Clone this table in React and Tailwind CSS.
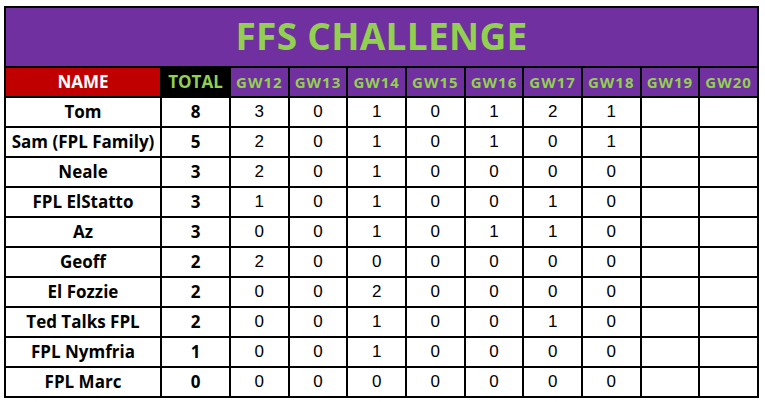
const rows = [
  ["Tom", 8, [3, 0, 1, 0, 1, 2, 1]],
  ["Sam (FPL Family)", 5, [2, 0, 1, 0, 1, 0, 1]],
  ["Neale", 3, [2, 0, 1, 0, 0, 0, 0]],
  ["FPL ElStatto", 3, [1, 0, 1, 0, 0, 1, 0]],
  ["Az", 3, [0, 0, 1, 0, 1, 1, 0]],
  ["Geoff", 2, [2, 0, 0, 0, 0, 0, 0]],
  ["El Fozzie", 2, [0, 0, 2, 0, 0, 0, 0]],
  ["Ted Talks FPL", 2, [0, 0, 1, 0, 0, 1, 0]],
  ["FPL Nymfria", 1, [0, 0, 1, 0, 0, 0, 0]],
  ["FPL Marc", 0, [0, 0, 0, 0, 0, 0, 0]],
]

const weeks = ["GW12", "GW13", "GW14", "GW15", "GW16", "GW17", "GW18", "GW19", "GW20"]

const App = () => {
  return (
    <div className="w-[765px] h-[402px] bg-white pt-[6px] pl-[4px]">
      <table className="w-[755px] border-collapse border-2 border-black font-['Open_Sans',sans-serif] table-fixed">
        <colgroup>
          <col className="w-[156px]" />
          <col className="w-[69px]" />
          {weeks.map((w) => (
            <col key={w} />
          ))}
        </colgroup>
        <thead>
          <tr>
            <th
              colSpan={11}
              className="h-[60px] pb-[4px] bg-[#7030a0] text-[#92d050] text-[37px] font-bold leading-none tracking-[0.3px] border-2 border-black"
            >
              FFS CHALLENGE
            </th>
          </tr>
          <tr className="h-[30px]">
            <th className="bg-[#c00000] text-white text-[17px] font-bold border-2 border-black">NAME</th>
            <th className="bg-black text-[#92d050] text-[17px] font-bold border-2 border-black">TOTAL</th>
            {weeks.map((w) => (
              <th
                key={w}
                className="bg-[#7030a0] text-[#92d050] text-[15px] font-bold tracking-[1px] border-2 border-black"
              >
                {w}
              </th>
            ))}
          </tr>
        </thead>
        <tbody>
          {rows.map(([name, total, scores]) => (
            <tr key={name} className="h-[30px]">
              <td className="text-center text-[17px] font-bold text-black whitespace-nowrap border-2 border-black">{name}</td>
              <td className="text-center text-[17px] font-bold text-black border-2 border-black">{total}</td>
              {weeks.map((w, i) => (
                <td
                  key={w}
                  className="text-center text-[17px] text-black font-['Liberation_Sans',sans-serif] border-2 border-black"
                >
                  {scores[i] ?? ""}
                </td>
              ))}
            </tr>
          ))}
        </tbody>
      </table>
    </div>
  )
}

export default App
